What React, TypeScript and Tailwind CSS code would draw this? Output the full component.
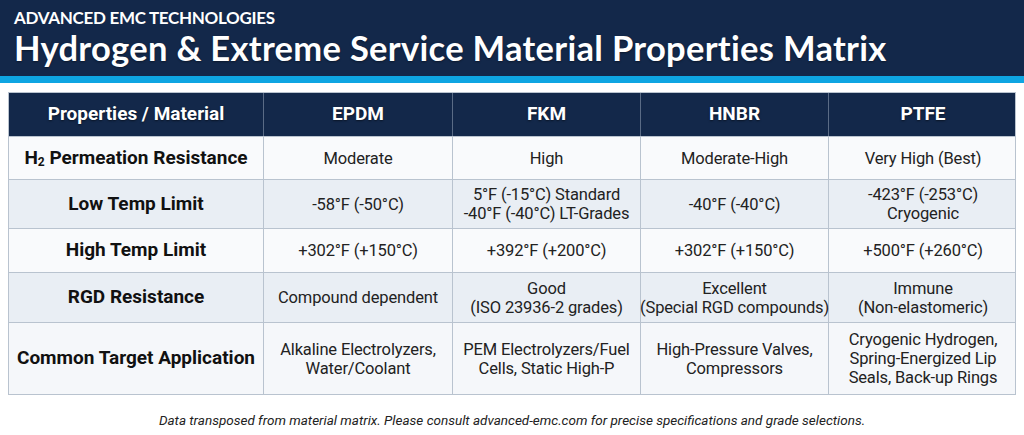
import React from "react";

const columns = ["EPDM", "FKM", "HNBR", "PTFE"];

type Row = {
    label: React.ReactNode;
    values: string[][];
    height: string;
    bg: string;
};

const rows: Row[] = [
    {
        label: (
            <>
                H<sub className="text-[12px] relative top-[2px]">2</sub> Permeation Resistance
            </>
        ),
        values: [["Moderate"], ["High"], ["Moderate-High"], ["Very High (Best)"]],
        height: "h-[43px]",
        bg: "bg-[#f9fafc]",
    },
    {
        label: "Low Temp Limit",
        values: [
            ["-58°F (-50°C)"],
            ["5°F (-15°C) Standard", "-40°F (-40°C) LT-Grades"],
            ["-40°F (-40°C)"],
            ["-423°F (-253°C)", "Cryogenic"],
        ],
        height: "h-[49px]",
        bg: "bg-[#e9eef4]",
    },
    {
        label: "High Temp Limit",
        values: [["+302°F (+150°C)"], ["+392°F (+200°C)"], ["+302°F (+150°C)"], ["+500°F (+260°C)"]],
        height: "h-[44px]",
        bg: "bg-[#f9fafc]",
    },
    {
        label: "RGD Resistance",
        values: [
            ["Compound dependent"],
            ["Good", "(ISO 23936-2 grades)"],
            ["Excellent", "(Special RGD compounds)"],
            ["Immune", "(Non-elastomeric)"],
        ],
        height: "h-[50px]",
        bg: "bg-[#e9eef4]",
    },
    {
        label: "Common Target Application",
        values: [
            ["Alkaline Electrolyzers,", "Water/Coolant"],
            ["PEM Electrolyzers/Fuel", "Cells, Static High-P"],
            ["High-Pressure Valves,", "Compressors"],
            ["Cryogenic Hydrogen,", "Spring-Energized Lip", "Seals, Back-up Rings"],
        ],
        height: "h-[72px]",
        bg: "bg-[#f5f7fa]",
    },
];

const App = () => {
    return (
        <div className="w-[1024px] h-[435px] bg-white font-['Roboto',sans-serif] overflow-hidden">
            <div className="bg-[#13284a] h-[76px] px-[14px] pt-[8px]">
                <div className="font-['Lato',sans-serif] font-bold text-white text-[17px] leading-[20px] tracking-[-0.3px]">
                    ADVANCED EMC TECHNOLOGIES
                </div>
                <div className="font-['Lato',sans-serif] font-bold text-white text-[34.5px] leading-[40px] tracking-[0.3px] [text-shadow:0_1px_2px_rgba(0,0,0,0.4)]">
                    Hydrogen &amp; Extreme Service Material Properties Matrix
                </div>
            </div>
            <div className="h-[7px] bg-[#0ea5e2]" />
            <div className="px-[8px] pt-[9px]">
                <div className="w-[1008px] border border-[#b9c3cf]">
                    <div className="grid grid-cols-[255px_189px_188px_188px_188px] h-[43px] bg-[#13284a] text-white font-bold text-[19px] [text-shadow:0_1px_2px_rgba(0,0,0,0.5)]">
                        <div className="flex items-center justify-center border-r border-[#5a6b85]">
                            Properties / Material
                        </div>
                        {columns.map((c, i) => (
                            <div
                                key={c}
                                className={`flex items-center justify-center ${i < 3 ? "border-r border-[#5a6b85]" : ""}`}
                            >
                                {c}
                            </div>
                        ))}
                    </div>
                    {rows.map((r, ri) => (
                        <div
                            key={ri}
                            className={`grid grid-cols-[255px_189px_188px_188px_188px] ${r.height} ${r.bg} border-t border-[#b9c3cf]`}
                        >
                            <div className="flex items-center justify-center border-r border-[#b9c3cf] font-bold text-[19px] text-[#111]">
                                <span>{r.label}</span>
                            </div>
                            {r.values.map((lines, vi) => (
                                <div
                                    key={vi}
                                    className={`flex flex-col items-center justify-center text-[16.5px] leading-[19px] text-[#222] whitespace-nowrap tracking-[-0.15px] ${vi < 3 ? "border-r border-[#b9c3cf]" : ""}`}
                                >
                                    {lines.map((l) => (
                                        <span key={l}>{l}</span>
                                    ))}
                                </div>
                            ))}
                        </div>
                    ))}
                </div>
            </div>
            <div className="text-center italic text-[13.5px] text-[#222] mt-[15px]">
                Data transposed from material matrix. Please consult advanced-emc.com for precise specifications and grade selections.
            </div>
        </div>
    );
};

export default App;
